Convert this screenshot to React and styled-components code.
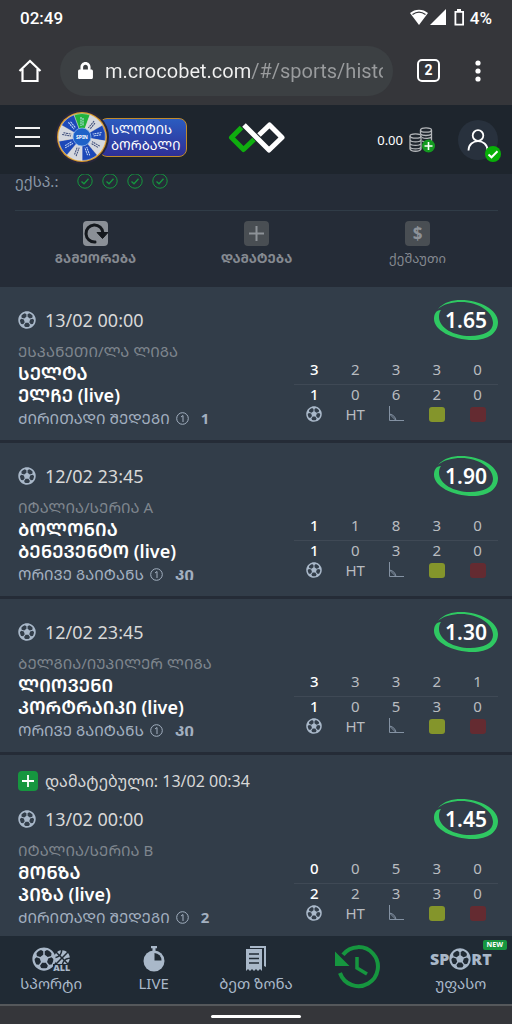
import React, { useState } from "react";
import styled, { createGlobalStyle } from "styled-components";
import { FaRegFutbol, FaLock, FaBasketballBall } from "react-icons/fa";

const matches = [
  {
    time: "13/02 00:00",
    league: "ესპანეთი/ლა ლიგა",
    home: "სელტა",
    away: "ელჩე",
    market: "ძირითადი შედეგი",
    pick: "1",
    odds: "1.65",
    stats: [
      [3, 2, 3, 3, 0],
      [1, 0, 6, 2, 0],
    ],
  },
  {
    time: "12/02 23:45",
    league: "იტალია/სერია A",
    home: "ბოლონია",
    away: "ბენევენტო",
    market: "ორივე გაიტანს",
    pick: "კი",
    odds: "1.90",
    stats: [
      [1, 1, 8, 3, 0],
      [1, 0, 3, 2, 0],
    ],
  },
  {
    time: "12/02 23:45",
    league: "ბელგია/იუპილერ ლიგა",
    home: "ლიოვენი",
    away: "კორტრაიკი",
    market: "ორივე გაიტანს",
    pick: "კი",
    odds: "1.30",
    stats: [
      [3, 3, 3, 2, 1],
      [1, 0, 5, 3, 0],
    ],
  },
  {
    added: "დამატებული: 13/02 00:34",
    time: "13/02 00:00",
    league: "იტალია/სერია B",
    home: "მონზა",
    away: "პიზა",
    market: "ძირითადი შედეგი",
    pick: "2",
    odds: "1.45",
    stats: [
      [0, 0, 5, 3, 0],
      [2, 2, 3, 3, 0],
    ],
  },
];

const slices = [0, 1, 2, 3, 4, 5, 6, 7, 8];

// headings use the Georgian capital (Mtavruli) letters
const Caps = ({ children }) => <span>{children.toUpperCase()}</span>;

function Wheel() {
  const point = (deg, r) => {
    const a = ((deg - 90) * Math.PI) / 180;
    return `${27 + r * Math.cos(a)} ${27 + r * Math.sin(a)}`;
  };
  return (
    <WheelSvg viewBox="0 0 54 54">
      <circle cx="27" cy="27" r="27" fill="#28263a" />
      <circle cx="27" cy="27" r="25" fill="#d99a2b" />
      {slices.map((i) => (
        <g key={i}>
          <path
            d={`M27 27L${point(i * 40 - 20, 23.5)}A23.5 23.5 0 0 1 ${point(i * 40 + 20, 23.5)}Z`}
            fill={i === 0 ? "#22b33c" : i % 2 ? "#d5d8de" : "#1c48b8"}
            stroke="#e8eaf0"
            strokeWidth="0.4"
          />
          <path
            d="M26 7V16M28 8V16"
            stroke={i === 0 || i % 2 === 0 ? "#c9dcf8" : "#3a4a78"}
            strokeWidth="1"
            strokeDasharray="2 0.6"
            transform={`rotate(${i * 40} 27 27)`}
          />
        </g>
      ))}
      <circle cx="27" cy="27" r="9" fill="#1e62c8" stroke="#8cb6ee" strokeWidth="0.8" />
      <text x="27" y="29" textAnchor="middle" fontSize="5" fontWeight="700" fill="#fff">
        SPIN
      </text>
    </WheelSvg>
  );
}

function Coins() {
  return (
    <svg width="28" height="26" viewBox="0 0 28 26" fill="none" stroke="#b4b7ba" strokeWidth="1.3">
      <ellipse cx="17" cy="3" rx="5.5" ry="2.2" />
      <path d="M11.5 3V7M22.5 3V16M11.5 7c2 2 9 2 11 0M13 10.5c3 1.5 8 1 9.5-.5M13 14c3 1.5 8 1 9.5-.5" />
      <ellipse cx="6.5" cy="9" rx="5.5" ry="2.2" />
      <path d="M1 9V22c1.5 3 9.5 3 11 0V9M1 13c1.5 2.5 9.5 2.5 11 0M1 16.5c1.5 2.5 9.5 2.5 11 0M1 20c1.5 2.5 9.5 2.5 11 0" />
      <circle cx="19.5" cy="19" r="6.5" fill="#149a20" stroke="none" />
      <path d="M19.5 15v8M15.5 19h8" stroke="#fff" strokeWidth="1.6" />
    </svg>
  );
}

function Match({ match }) {
  return (
    <Card>
      {match.added && (
        <Added>
          <Plus viewBox="0 0 20 20">
            <rect width="20" height="20" rx="4" fill="#16963f" />
            <path d="M10 4v12M4 10h12" stroke="#fff" strokeWidth="1.8" />
          </Plus>
          {match.added}
        </Added>
      )}
      <CardTop>
        <FaRegFutbol size={18} color="#a9b8c9" />
        <time>{match.time}</time>
        <Odds>
          <svg viewBox="0 0 64 42">
            <path
              d="M4 10C10 3 18 1 27 1C46 1 64 11 64 23C64 34 54 41 39 41C18 41 0 31 0 20C0 15 2 11 7 11C5 14 5 16 5 18C5 29 20 37 36 37C50 37 59 32 59 24C59 13 45 3 27 3C18 3 10 5 4 10Z"
              fill="#2fc862"
            />
          </svg>
          <span>{match.odds}</span>
        </Odds>
      </CardTop>
      <CardBody>
        <div>
          <League>
            <Caps>{match.league}</Caps>
          </League>
          <Team>
            <Caps>{match.home}</Caps>
          </Team>
          <Team>
            <Caps>{match.away}</Caps> (live)
          </Team>
          <Market>
            <Caps>{match.market}</Caps>
            <svg width="13" height="13" viewBox="0 0 13 13" fill="none" stroke="#a3b0c0">
              <circle cx="6.5" cy="6.5" r="5.8" />
              <path d="M5 5l2-1.5V10" />
            </svg>
            <b>
              <Caps>{match.pick}</Caps>
            </b>
          </Market>
        </div>
        <Stats>
          <tbody>
            {match.stats.map((row, i) => (
              <tr key={i}>
                {row.map((n, j) => (
                  <td key={j}>{n}</td>
                ))}
              </tr>
            ))}
          </tbody>
          <tfoot>
            <tr>
              <td>
                <FaRegFutbol size={16} color="#a9b8c9" />
              </td>
              <td>HT</td>
              <td>
                <svg width="16" height="16" viewBox="0 0 16 16" fill="none" stroke="#8492a3">
                  <path d="M1.5 0V14.5H16M1.5 8C5 8.5 7.5 11 8 14.5M1.5 8L8 14.5" />
                </svg>
              </td>
              <td>
                <Foul $color="#84952b" />
              </td>
              <td>
                <Foul $color="#642b31" />
              </td>
            </tr>
          </tfoot>
        </Stats>
      </CardBody>
    </Card>
  );
}

function App() {
  const [url, setUrl] = useState("m.crocobet.com/#/sports/history");
  return (
    <Shell>
      <GlobalStyle />
      <StatusBar>
        <span>02:49</span>
        <svg width="56" height="18" viewBox="0 0 56 18" fill="#fff">
          <path d="M0 4C5-.5 13-.5 18 4L9 16Z" />
          <path d="M2.5 5.5C6.5 2.5 11.5 2.5 15.5 5.5" fill="none" stroke="#35363a" strokeWidth="1.2" />
          <path d="M36 0V16H20Z" />
          <path d="M47 0h4v2h3v14.5H44.5V2H47ZM46.3 3.8V14.7H52.2V3.8Z" fillRule="evenodd" />
        </svg>
        <span>4%</span>
      </StatusBar>
      <BrowserBar>
        <IconButton aria-label="Home">
          <svg width="24" height="24" viewBox="0 0 24 24" fill="none" stroke="#fff" strokeWidth="2.2">
            <path d="M1.5 12L12 2l10.5 10M4.5 10v12h15V10" />
          </svg>
        </IconButton>
        <Address>
          <FaLock size={17} color="#fff" />
          <input aria-label="Address" value={url} onChange={(e) => setUrl(e.target.value)} />
        </Address>
        <Tabs aria-label="Tabs">2</Tabs>
        <IconButton aria-label="More">
          <svg width="20" height="24" viewBox="0 0 20 24" fill="#fff">
            <circle cx="10" cy="4" r="2.6" />
            <circle cx="10" cy="12" r="2.6" />
            <circle cx="10" cy="20" r="2.6" />
          </svg>
        </IconButton>
      </BrowserBar>
      <Header>
        <HeaderSide>
          <IconButton aria-label="Menu">
            <svg width="25" height="22" viewBox="0 0 25 22" stroke="#f2f2f2" strokeWidth="2.2">
              <path d="M0 2h25M0 11h25M0 20h25" />
            </svg>
          </IconButton>
          <Banner href="#wheel">
            <Wheel />
            <BannerText>
              <Caps>სლოტის</Caps>
              <Caps>ბორბალი</Caps>
            </BannerText>
          </Banner>
        </HeaderSide>
        <svg width="58" height="36" viewBox="0 0 58 36" fill="none" strokeWidth="5" strokeLinejoin="round">
          <path d="M13.5 5.5L3.5 15.5L15.5 27.5L26 17.5" stroke="#0fae0f" />
          <path d="M16 3L41 28L54 15.5L41.5 3L31 13" stroke="#fff" />
        </svg>
        <HeaderSide $end>
          <Balance>0.00</Balance>
          <Coins />
          <Avatar aria-label="Profile">
            <svg width="22" height="22" viewBox="0 0 22 22" fill="none" stroke="#fff" strokeWidth="1.8">
              <circle cx="11" cy="6.5" r="5.3" />
              <path d="M1.5 21.5C1.5 9 20.5 9 20.5 21.5" />
            </svg>
            <Verified viewBox="0 0 16 16">
              <circle cx="8" cy="8" r="8" fill="#08b008" />
              <path d="M3.5 8.5l3 2.8l6-6" fill="none" stroke="#fff" strokeWidth="2" />
            </Verified>
          </Avatar>
        </HeaderSide>
      </Header>
      <Main>
        <Panel>
          <Summary>
            <span>ექსპ.:</span>
            {[1, 2, 3, 4].map((n) => (
              <svg key={n} width="16" height="16" viewBox="0 0 16 16" fill="none" stroke="#16963f">
                <circle cx="8" cy="8" r="7.2" />
                <path d="M4.5 8.5l2.5 2.3l4.5-5" strokeWidth="1.3" />
              </svg>
            ))}
          </Summary>
          <Actions>
            <Action>
              <svg viewBox="0 0 25 25">
                <rect width="25" height="25" rx="4" fill="#8b9097" />
                <path d="M12 21A8.5 8.5 0 1 1 20 12" fill="none" stroke="#14181d" strokeWidth="3" strokeLinecap="round" />
                <path d="M14 11.5L19.5 17.5L25 11.5Z" fill="#14181d" stroke="#14181d" strokeLinejoin="round" />
              </svg>
              <b>
                <Caps>გამეორება</Caps>
              </b>
            </Action>
            <Action>
              <svg viewBox="0 0 25 25">
                <rect width="25" height="25" rx="4" fill="#494e53" />
                <path d="M12.5 5v15M5 12.5h15" stroke="#8d9298" strokeWidth="2" />
              </svg>
              <b>
                <Caps>დამატება</Caps>
              </b>
            </Action>
            <Action>
              <svg viewBox="0 0 25 25">
                <rect width="25" height="25" rx="4" fill="#494e53" />
                <text x="12.5" y="18.5" textAnchor="middle" fontSize="17" fontWeight="700" fill="#8d9298">
                  $
                </text>
              </svg>
              <span>ქეშაუთი</span>
            </Action>
          </Actions>
        </Panel>
        {matches.map((m) => (
          <Match key={m.home} match={m} />
        ))}
      </Main>
      <Nav>
        <NavItem href="#sport">
          <SportIcons>
            <FaRegFutbol size={24} />
            <FaBasketballBall size={16} />
            <span>ALL</span>
          </SportIcons>
          სპორტი
        </NavItem>
        <NavItem href="#live">
          <svg width="22" height="26" viewBox="0 0 22 26">
            <path d="M8 0h6v2.2h-1.5V5h-3V2.2H8Z" fill="currentColor" />
            <circle cx="11" cy="15" r="10.5" fill="currentColor" />
            <path d="M11.5 14.5V7A7.5 7.5 0 0 1 18.5 14.5Z" fill="#202a34" />
          </svg>
          LIVE
        </NavItem>
        <NavItem href="#zone">
          <svg width="22" height="26" viewBox="0 0 22 26" fill="currentColor">
            <path d="M5 0H21V21L19 20V2H5Z" />
            <path d="M1 3H17V25L15 23L13 25L11 23L9 25L7 23L5 25L3 23L1 25Z" />
            <path d="M4 8h10M4 12.5h10M4 17h10" stroke="#202a34" strokeWidth="1.5" />
          </svg>
          ბეთ ზონა
        </NavItem>
        <NavItem href="#history" aria-label="History">
          <svg width="46" height="50" viewBox="0 0 46 50" fill="none" stroke="#16963f" strokeWidth="4">
            <path d="M8 9.7A19.5 19.5 0 1 1 5 28" />
            <path d="M0 6.5V21H14.5Z" fill="#16963f" stroke="none" />
            <path d="M22 12V23L32 29" strokeWidth="3.5" />
          </svg>
        </NavItem>
        <NavItem href="#free">
          <New>NEW</New>
          <SportLogo>
            SP
            <FaRegFutbol size={22} />
            RT
          </SportLogo>
          უფასო
        </NavItem>
      </Nav>
      <GestureBar>
        <i />
      </GestureBar>
    </Shell>
  );
}

export default App;

const GlobalStyle = createGlobalStyle`
  * {
    box-sizing: border-box;
  }
  body {
    margin: 0;
    background: #35363a;
    font-family: "Noto Sans", "Noto Sans Georgian", "DejaVu Sans", sans-serif;
  }
  button {
    padding: 0;
    border: 0;
    background: none;
    color: inherit;
    font: inherit;
  }
  a {
    color: inherit;
    text-decoration: none;
  }
  svg {
    flex: none;
  }
`;

const Shell = styled.div`
  display: flex;
  flex-direction: column;
  height: 100vh;
  color: #fff;
`;

const StatusBar = styled.div`
  display: flex;
  align-items: center;
  height: 36px;
  padding: 0 20px;
  gap: 4px;
  font: 500 17px Roboto, sans-serif;
  span:first-child {
    flex: 1;
  }
`;

const BrowserBar = styled.div`
  display: flex;
  align-items: center;
  height: 69px;
  padding: 0 24px 0 18px;
`;

const IconButton = styled.button`
  display: flex;
  align-items: center;
`;

const Address = styled.label`
  flex: 1;
  display: flex;
  align-items: center;
  gap: 11px;
  min-width: 0;
  height: 50px;
  margin: 0 24px 0 18px;
  padding: 0 10px 0 17px;
  border-radius: 25px;
  background: #3c4043;
  input {
    flex: 1;
    min-width: 0;
    padding: 0;
    border: 0;
    outline: 0;
    font: 20px Roboto, sans-serif;
    color: transparent;
    background: linear-gradient(90deg, #f1f1f1 145px, #9a9c9e 145px);
    background-clip: text;
  }
`;

const Tabs = styled.button`
  width: 23px;
  height: 23px;
  margin-right: 28px;
  border: 2px solid #fff;
  border-radius: 5px;
  font: 700 14px/19px Roboto, sans-serif;
`;

const Header = styled.header`
  display: grid;
  grid-template-columns: 1fr auto 1fr;
  align-items: center;
  height: 69px;
  padding: 0 14px 0 15px;
  background: #1e252d;
`;

const HeaderSide = styled.div`
  display: flex;
  align-items: center;
  justify-content: ${(p) => (p.$end ? "flex-end" : "flex-start")};
  padding-bottom: ${(p) => (p.$end ? "0" : "5px")};
`;

const Banner = styled.a`
  display: flex;
  align-items: center;
  margin-left: 15px;
`;

const WheelSvg = styled.svg`
  position: relative;
  width: 54px;
  height: 54px;
`;

const BannerText = styled.span`
  display: flex;
  flex-direction: column;
  justify-content: center;
  width: 88px;
  height: 39px;
  margin-left: -10px;
  padding-left: 11px;
  border: 1px solid #c08a2c;
  border-radius: 8px;
  background: linear-gradient(#2b5cc0, #2f2f96);
  font-size: 13px;
  line-height: 16px;
`;

const Balance = styled.span`
  margin-right: 6px;
  font-size: 13px;
`;

const Avatar = styled.button`
  position: relative;
  display: flex;
  align-items: center;
  justify-content: center;
  width: 40px;
  height: 40px;
  margin-left: 21px;
  border-radius: 50%;
  background: #28313d;
`;

const Verified = styled.svg`
  position: absolute;
  right: -3px;
  bottom: -2px;
  width: 16px;
  height: 16px;
`;

const Main = styled.main`
  flex: 1;
  min-height: 0;
  overflow: hidden;
  background: #323d49;
`;

const Panel = styled.section`
  height: 113px;
  padding: 0 14px 0 15px;
  background: #252c37;
`;

const Summary = styled.div`
  display: flex;
  align-items: center;
  gap: 9px;
  height: 37px;
  padding-bottom: 23px;
  border-bottom: 1px solid #303c47;
  color: #8a97a6;
  font-size: 15px;
  span {
    width: 53px;
  }
`;

const Actions = styled.div`
  display: grid;
  grid-template-columns: repeat(3, 1fr);
  padding-top: 10px;
`;

const Action = styled.button`
  display: flex;
  flex-direction: column;
  align-items: center;
  color: #858a91;
  font-size: 13px;
  line-height: 24px;
  svg {
    width: 25px;
    height: 25px;
  }
`;

const Card = styled.article`
  padding: 13px 14px 9px 18px;
  border-bottom: 3px solid #252c37;
`;

const Added = styled.div`
  display: flex;
  align-items: center;
  gap: 7px;
  height: 24px;
  margin: 1px 0 6px;
  color: #d8d8d8;
  font-size: 16px;
`;

const Plus = styled.svg`
  width: 20px;
  height: 20px;
`;

const CardTop = styled.div`
  display: flex;
  align-items: center;
  gap: 9px;
  height: 40px;
  color: #d8d8d8;
  font-size: 18px;
`;

const Odds = styled.div`
  display: grid;
  place-items: center;
  width: 64px;
  height: 42px;
  margin-left: auto;
  color: #fff;
  font-size: 21px;
  font-weight: 600;
  line-height: 38px;
  svg,
  span {
    grid-area: 1 / 1;
  }
  svg {
    width: 64px;
    height: 42px;
  }
`;

const CardBody = styled.div`
  display: grid;
  grid-template-columns: 1fr 204px;
  align-items: start;
  white-space: nowrap;
`;

const League = styled.div`
  height: 22px;
  color: #7f868e;
  font-size: 15px;
  line-height: 22px;
`;

const Team = styled.div`
  height: 22px;
  font-size: 18px;
  font-weight: 600;
  line-height: 22px;
`;

const Market = styled.div`
  display: flex;
  align-items: center;
  height: 25px;
  color: #a3b0c0;
  font-size: 15px;
  line-height: 25px;
  svg {
    margin: 0 12px 0 6px;
  }
`;

const Stats = styled.table`
  width: 100%;
  margin-top: 14px;
  border-collapse: collapse;
  table-layout: fixed;
  color: #b9bcc0;
  font-size: 15px;
  line-height: 18px;
  td {
    height: 20px;
    padding: 0;
    text-align: center;
    vertical-align: middle;
  }
  tbody tr:first-child td {
    height: 30px;
    border-bottom: 1px solid #3f4955;
  }
  tbody td:first-child {
    color: #fff;
    font-weight: 500;
  }
  svg {
    display: block;
    margin: 0 auto;
  }
`;

const Foul = styled.i`
  display: block;
  width: 16px;
  height: 15px;
  margin: 0 auto;
  border-radius: 3px;
  background: ${(p) => p.$color};
`;

const Nav = styled.nav`
  display: grid;
  grid-template-columns: repeat(5, 1fr);
  height: 68px;
  background: #202a34;
  color: #a9b8c9;
`;

const NavItem = styled.a`
  position: relative;
  display: flex;
  flex-direction: column;
  align-items: center;
  justify-content: center;
  font-size: 15px;
  line-height: 22px;
`;

const SportIcons = styled.span`
  position: relative;
  display: flex;
  align-items: flex-end;
  height: 26px;
  padding-bottom: 1px;
  svg + svg {
    margin: 0 0 5px -2px;
  }
  span {
    position: absolute;
    right: 0;
    bottom: 0;
    background: #202a34;
    font-size: 9px;
    font-weight: 900;
    line-height: 8px;
  }
`;

const SportLogo = styled.span`
  display: flex;
  align-items: center;
  height: 26px;
  font: 900 16px/26px "Noto Sans", sans-serif;
`;

const New = styled.span`
  position: absolute;
  top: 4px;
  right: 5px;
  padding: 0 4px;
  border-radius: 2px;
  background: #16963f;
  color: #fff;
  font-size: 7px;
  font-weight: 700;
  line-height: 10px;
`;

const GestureBar = styled.div`
  display: flex;
  align-items: center;
  justify-content: center;
  height: 20px;
  border-top: 2px solid #55585b;
  padding-top: 3px;
  i {
    width: 90px;
    height: 3px;
    border-radius: 2px;
    background: #fff;
  }
`;
